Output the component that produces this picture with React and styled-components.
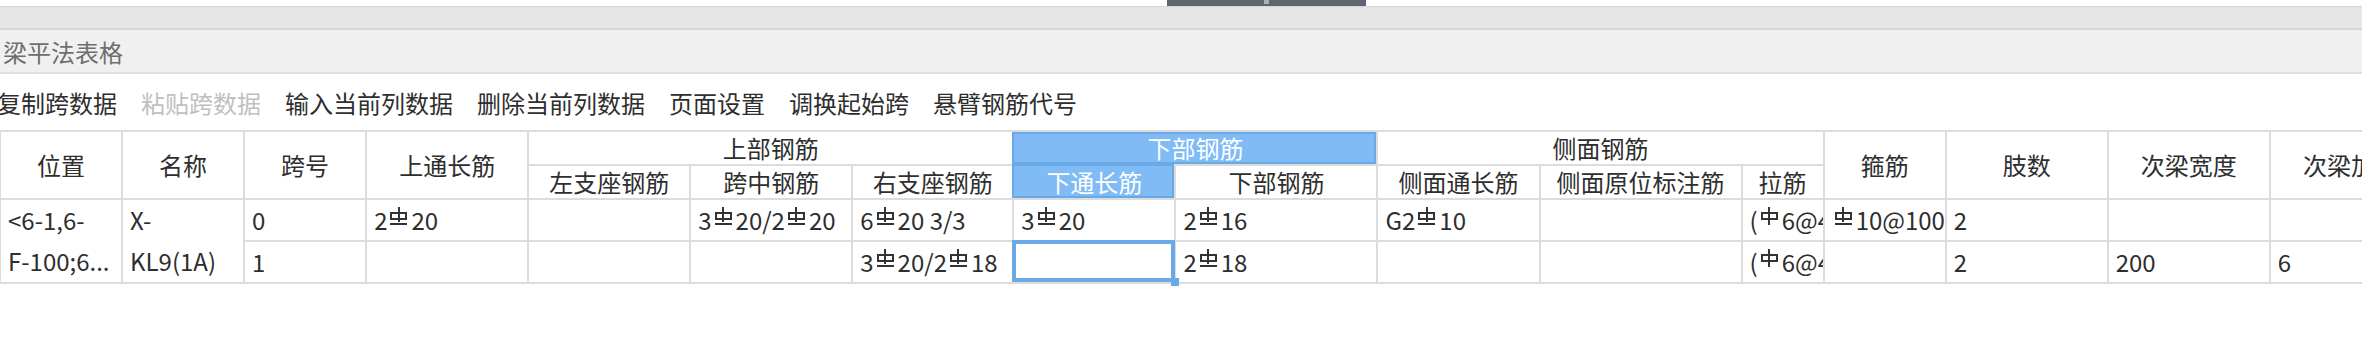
import React from 'react';
import styled, { createGlobalStyle } from 'styled-components';

const GlobalStyle = createGlobalStyle`
  html, body {
    margin: 0;
    padding: 0;
    background: #fff;
    overflow: hidden;
  }
  body {
    font-family: "Noto Sans CJK SC", "Noto Sans", sans-serif;
    color: #333;
  }
`;

const Page = styled.div`
  width: 2362px;
  height: 346px;
  overflow: hidden;
  background: #fff;
`;

const TopStrip = styled.div`
  display: flex;
  height: 6px;
`;

const DockTab = styled.div`
  margin-left: 1167px;
  width: 199px;
  height: 6px;
  background: #5e6771;
  display: flex;
  justify-content: center;
  &::before {
    content: '';
    width: 5px;
    height: 4px;
    background: #aab1b8;
  }
`;

const WindowBar = styled.div`
  height: 21px;
  background: #e6e6e6;
  border-top: 1px solid #d6d6d6;
  border-bottom: 2px solid #d6d6d6;
`;

const TitleBar = styled.div`
  height: 42px;
  display: flex;
  align-items: center;
  padding-left: 3px;
  background: #f0f0f0;
  border-bottom: 2px solid #e0e0e0;
`;

const Title = styled.span`
  font-size: 24px;
  line-height: normal;
  color: #6e6e6e;
`;

const Toolbar = styled.div`
  height: 56px;
  display: flex;
  align-items: center;
  gap: 24px;
  margin-left: -3px;
`;

const ToolButton = styled.span`
  font-size: 24px;
  line-height: normal;
  color: ${(p) => (p.$disabled ? '#c0c0c0' : '#2e2e2e')};
  cursor: ${(p) => (p.$disabled ? 'default' : 'pointer')};
  white-space: nowrap;
`;

const Sheet = styled.table`
  table-layout: fixed;
  border-collapse: separate;
  border-spacing: 0;
  width: 2433px;
  border-top: 2px solid #dcdcdc;
  border-left: 1px solid #dcdcdc;
  font-size: 24px;
`;

const Col = styled.col`
  width: ${(p) => p.$w}px;
`;

const HeadRow = styled.tr`
  height: 34px;
`;

const DataRow = styled.tr`
  height: 42px;
`;

const Head = styled.th`
  position: relative;
  padding: 0;
  font-weight: normal;
  text-align: center;
  vertical-align: middle;
  white-space: nowrap;
  line-height: 32px;
  border-right: 2px solid #dcdcdc;
  border-bottom: 2px solid #dcdcdc;
  background: ${(p) => (p.$active ? '#80bbf6' : '#fff')};
  color: ${(p) => (p.$active ? '#fff' : '#2e2e2e')};
  &::after {
    content: '';
    display: ${(p) => (p.$active ? 'block' : 'none')};
    position: absolute;
    top: ${(p) => (p.$sub ? '-2px' : '0')};
    left: -2px;
    right: 0;
    bottom: 0;
    border: 2px solid #6aa9e8;
    pointer-events: none;
  }
`;

const Cell = styled.td`
  position: ${(p) => (p.$selected ? 'relative' : 'static')};
  padding: 0 7px;
  text-align: left;
  vertical-align: middle;
  white-space: nowrap;
  overflow: ${(p) => (p.$selected ? 'visible' : 'hidden')};
  line-height: 40px;
  border-right: 2px solid #dcdcdc;
  border-bottom: 2px solid #dcdcdc;
  color: #2e2e2e;
  &::after {
    content: '';
    display: ${(p) => (p.$selected ? 'block' : 'none')};
    position: absolute;
    top: -2px;
    left: -2px;
    right: -1px;
    bottom: 0;
    border: 4px solid #6aa9e6;
  }
  &::before {
    content: '';
    display: ${(p) => (p.$selected ? 'block' : 'none')};
    position: absolute;
    width: 8px;
    height: 8px;
    right: -5px;
    bottom: -4px;
    background: #6aa9e6;
    z-index: 1;
  }
`;

const MergedCell = styled(Cell)`
  vertical-align: top;
`;

const Line = styled.div`
  height: 41px;
  line-height: 40px;
  white-space: nowrap;
  overflow: hidden;
`;

const Rebar = styled.span`
  display: inline-block;
  position: relative;
  width: 17px;
  height: 18px;
  margin: 0 4px 0 3px;
  vertical-align: 5px;
  box-sizing: border-box;
  border-bottom: ${(p) => (p.$plain ? 'none' : '2px solid #333')};
  &::before {
    content: '';
    position: absolute;
    top: 5px;
    left: 0;
    right: 0;
    height: 8px;
    border: 2px solid #333;
    box-sizing: border-box;
  }
  &::after {
    content: '';
    position: absolute;
    top: 0;
    left: 50%;
    margin-left: -1px;
    width: 2px;
    height: ${(p) => (p.$plain ? '18px' : '15px')};
    background: #333;
  }
`;

// ⊕ = 三级钢, Φ = 一级钢
const Bars = ({ text }) => {
  if (!text) return null;
  const parts = text.split(/([⊕Φ])/);
  return parts.map((part, i) => {
    if (part === '⊕') return <Rebar key={i} title="⊕" />;
    if (part === 'Φ') return <Rebar key={i} $plain title="Φ" />;
    return <React.Fragment key={i}>{part}</React.Fragment>;
  });
};

const columns = [122, 122, 122, 162, 162, 162, 161, 162, 202, 162, 202, 82, 122, 162, 162, 162];

const spans = [
  {
    no: '0',
    top: '2⊕20',
    left: '',
    mid: '3⊕20/2⊕20',
    right: '6⊕20 3/3',
    bottomLong: '3⊕20',
    bottom: '2⊕16',
    sideLong: 'G2⊕10',
    sideMark: '',
    tie: '(Φ6@400)',
    stirrup: '⊕10@100/200(2)',
    legs: '2',
    width: '',
    extra: '',
  },
  {
    no: '1',
    top: '',
    left: '',
    mid: '',
    right: '3⊕20/2⊕18',
    bottomLong: '',
    bottom: '2⊕18',
    sideLong: '',
    sideMark: '',
    tie: '(Φ6@400)',
    stirrup: '',
    legs: '2',
    width: '200',
    extra: '6',
  },
];

export default function App() {
  return (
    <>
      <GlobalStyle />
      <Page>
        <TopStrip>
          <DockTab />
        </TopStrip>
        <WindowBar />
        <TitleBar>
          <Title>梁平法表格</Title>
        </TitleBar>
        <Toolbar>
          <ToolButton>复制跨数据</ToolButton>
          <ToolButton $disabled>粘贴跨数据</ToolButton>
          <ToolButton>输入当前列数据</ToolButton>
          <ToolButton>删除当前列数据</ToolButton>
          <ToolButton>页面设置</ToolButton>
          <ToolButton>调换起始跨</ToolButton>
          <ToolButton>悬臂钢筋代号</ToolButton>
        </Toolbar>
        <Sheet>
          <colgroup>
            {columns.map((w, i) => (
              <Col key={i} $w={w} />
            ))}
          </colgroup>
          <thead>
            <HeadRow>
              <Head rowSpan={2}>位置</Head>
              <Head rowSpan={2}>名称</Head>
              <Head rowSpan={2}>跨号</Head>
              <Head rowSpan={2}>上通长筋</Head>
              <Head colSpan={3}>上部钢筋</Head>
              <Head colSpan={2} $active>下部钢筋</Head>
              <Head colSpan={3}>侧面钢筋</Head>
              <Head rowSpan={2}>箍筋</Head>
              <Head rowSpan={2}>肢数</Head>
              <Head rowSpan={2}>次梁宽度</Head>
              <Head rowSpan={2}>次梁加筋</Head>
            </HeadRow>
            <HeadRow>
              <Head>左支座钢筋</Head>
              <Head>跨中钢筋</Head>
              <Head>右支座钢筋</Head>
              <Head $active $sub>下通长筋</Head>
              <Head>下部钢筋</Head>
              <Head>侧面通长筋</Head>
              <Head>侧面原位标注筋</Head>
              <Head>拉筋</Head>
            </HeadRow>
          </thead>
          <tbody>
            {spans.map((s, i) => (
              <DataRow key={s.no}>
                {i === 0 && (
                  <>
                    <MergedCell rowSpan={2}>
                      <Line>&lt;6-1,6-</Line>
                      <Line>F-100;6...</Line>
                    </MergedCell>
                    <MergedCell rowSpan={2}>
                      <Line>X-</Line>
                      <Line>KL9(1A)</Line>
                    </MergedCell>
                  </>
                )}
                <Cell>{s.no}</Cell>
                <Cell><Bars text={s.top} /></Cell>
                <Cell><Bars text={s.left} /></Cell>
                <Cell><Bars text={s.mid} /></Cell>
                <Cell><Bars text={s.right} /></Cell>
                <Cell $selected={i === 1}><Bars text={s.bottomLong} /></Cell>
                <Cell><Bars text={s.bottom} /></Cell>
                <Cell><Bars text={s.sideLong} /></Cell>
                <Cell><Bars text={s.sideMark} /></Cell>
                <Cell><Bars text={s.tie} /></Cell>
                <Cell><Bars text={s.stirrup} /></Cell>
                <Cell>{s.legs}</Cell>
                <Cell>{s.width}</Cell>
                <Cell>{s.extra}</Cell>
              </DataRow>
            ))}
          </tbody>
        </Sheet>
      </Page>
    </>
  );
}
